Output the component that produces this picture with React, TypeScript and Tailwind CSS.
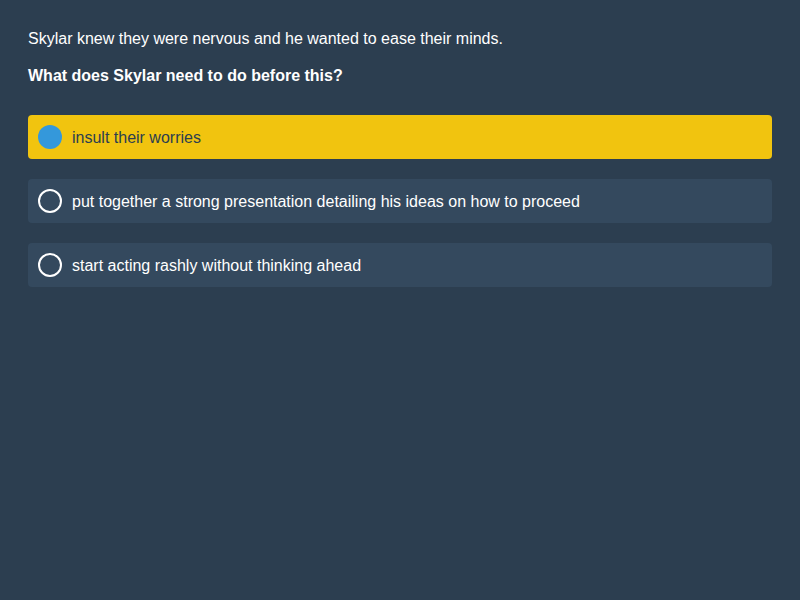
import React from "react";

const options = [
  { text: "insult their worries", selected: true },
  { text: "put together a strong presentation detailing his ideas on how to proceed", selected: false },
  { text: "start acting rashly without thinking ahead", selected: false },
];

export default function App() {
  return (
    <div
      className="w-[800px] h-[600px] bg-[#2c3e50] px-[28px] pt-[28px] text-white"
      style={{ fontFamily: '"Liberation Sans", Arial, sans-serif' }}
    >
      <p className="text-[16px] leading-[21px] mb-[16px]">
        Skylar knew they were nervous and he wanted to ease their minds.
      </p>
      <p className="text-[16px] leading-[21px] font-bold mb-[29px]">
        What does Skylar need to do before this?
      </p>
      <div className="flex flex-col gap-[20px]">
        {options.map((o) => (
          <div
            key={o.text}
            className={
              o.selected
                ? "flex items-center h-[44px] rounded-[4px] bg-[#f1c40f] px-[10px] text-[#2c3e50]"
                : "flex items-center h-[44px] rounded-[4px] bg-[#34495e] px-[10px] text-white"
            }
          >
            {o.selected ? (
              <span className="w-[24px] h-[24px] rounded-full bg-[#3498db] shrink-0" />
            ) : (
              <span className="w-[24px] h-[24px] rounded-full border-2 border-white shrink-0" />
            )}
            <span className="ml-[10px] mt-[2px] text-[16px] leading-[20px]">{o.text}</span>
          </div>
        ))}
      </div>
    </div>
  );
}
